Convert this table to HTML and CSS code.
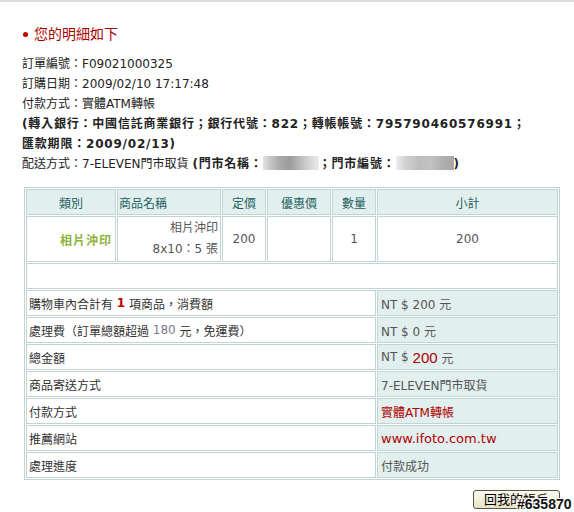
FILE: index.html
```html
<!DOCTYPE html>
<html lang="zh-Hant">
<head>
<meta charset="utf-8">
<title>您的明細如下</title>
<link rel="stylesheet" href="styles.css">
</head>
<body>
<div class="page">
  <h2 class="title"><span class="dot"></span>您的明細如下</h2>
  <div class="info">
    <p>訂單編號：F09021000325</p>
    <p>訂購日期：2009/02/10 17:17:48</p>
    <p>付款方式：實體ATM轉帳</p>
    <p class="b">(轉入銀行：中國信託商業銀行；銀行代號：822；轉帳帳號：795790460576991；<br>匯款期限：2009/02/13)</p>
    <p>配送方式：7-ELEVEN門市取貨 <span class="b">(門市名稱：<span class="blur blur-a"></span>；門市編號：<span class="blur blur-b"></span>)</span></p>
  </div>

  <div class="order">
    <div class="cell head">類別</div>
    <div class="cell head head-left">商品名稱</div>
    <div class="cell head">定價</div>
    <div class="cell head">優惠價</div>
    <div class="cell head">數量</div>
    <div class="cell head">小計</div>

    <div class="cell cat">相片沖印</div>
    <div class="cell name"><span>相片沖印</span><span>8x10：5 張</span></div>
    <div class="cell num">200</div>
    <div class="cell num"></div>
    <div class="cell num">1</div>
    <div class="cell num">200</div>

    <div class="cell blank"></div>

    <div class="cell label">購物車內合計有&nbsp;<span class="red-b">1</span>&nbsp;項商品，消費額</div>
    <div class="cell val">NT $ 200 元</div>

    <div class="cell label">處理費（訂單總額超過&nbsp;<span class="muted">180</span>&nbsp;元，免運費）</div>
    <div class="cell val">NT $ 0 元</div>

    <div class="cell label">總金額</div>
    <div class="cell val">NT $&nbsp;<span class="big-red">200</span>&nbsp;元</div>

    <div class="cell label">商品寄送方式</div>
    <div class="cell val">7-ELEVEN門市取貨</div>

    <div class="cell label">付款方式</div>
    <div class="cell val red">實體ATM轉帳</div>

    <div class="cell label">推薦網站</div>
    <div class="cell val red site">www.ifoto.com.tw</div>

    <div class="cell label">處理進度</div>
    <div class="cell val">付款成功</div>
  </div>

  <div class="actions"><button class="btn" type="button">回我的帳戶</button></div>
</div>
<div class="watermark">#635870</div>
</body>
</html>
```

FILE: styles.css
```css
html, body {
  margin: 0;
  padding: 0;
}

body {
  font-family: "DejaVu Sans", "Noto Sans CJK TC", sans-serif;
  font-size: 12px;
  color: #222;
  background: #fff;
  border-top: 2px solid #dcdcdc;
  position: relative;
  overflow: hidden;
}

.page {
  padding: 22px 0 0 22px;
  width: 540px;
}

.title {
  margin: 0;
  font-size: 14px;
  font-weight: normal;
  line-height: 20px;
  color: #a80000;
  display: flex;
  align-items: center;
  gap: 6px;
}

.dot {
  display: block;
  width: 5px;
  height: 5px;
  margin-left: 1px;
  border-radius: 50%;
  background: #c40000;
}

.info {
  margin-top: 10px;
}

.info p {
  margin: 0;
  line-height: 20px;
  white-space: nowrap;
}

.b {
  font-weight: bold;
  letter-spacing: 0.8px;
}

.blur {
  display: inline-block;
  height: 14px;
  vertical-align: -2px;
  letter-spacing: 0;
}

.blur-a {
  width: 56px;
  background: linear-gradient(90deg, #e4e4e4 0, #c8c8c8 12%, #a9a9a9 30%, #9c9c9c 48%, #b9b9b9 65%, #d4d4d4 82%, #ececec 100%);
}

.blur-b {
  width: 58px;
  background: linear-gradient(90deg, #eeeeee 0, #d2d2d2 15%, #bdbdbd 40%, #c2c2c2 60%, #b0aeb0 80%, #a9a5a7 100%);
}

.order {
  margin: 13px 0 0 2px;
  width: 536px;
  box-sizing: border-box;
  border: 1px solid #c2d3d3;
  padding: 1px;
  display: grid;
  grid-template-columns: 90px 104px 44px 64px 44px 181px;
  grid-template-rows: 26px 46px 26px repeat(7, 26px);
  gap: 1px;
}

.cell {
  box-sizing: border-box;
  border: 1px solid #c2d3d3;
  background: #fff;
  display: flex;
  align-items: center;
  color: #555;
  white-space: nowrap;
  overflow: hidden;
}

.head {
  background: #e2efef;
  color: #1d5f5f;
  justify-content: center;
}

.head-left {
  justify-content: flex-start;
  padding-left: 1px;
}

.cat {
  justify-content: flex-end;
  padding-right: 3px;
  color: #8cb43a;
  font-weight: bold;
  letter-spacing: 1px;
}

.name {
  flex-direction: column;
  align-items: flex-end;
  justify-content: center;
  padding-right: 2px;
  line-height: 21px;
}

.num {
  justify-content: center;
}

.blank {
  grid-column: 1 / -1;
}

.label {
  grid-column: 1 / 6;
  padding-left: 2px;
  color: #333;
}

.val {
  background: #e2efef;
  padding-left: 3px;
}

.red {
  color: #b00000;
}

.site {
  font-size: 13px;
}

.red-b {
  color: #c00000;
  font-weight: bold;
}

.muted {
  color: #7a7a8a;
}

.big-red {
  color: #b00000;
  font-family: "Liberation Sans", sans-serif;
  font-size: 15px;
}

.actions {
  margin: 10px 0 0 2px;
  width: 536px;
  display: flex;
  justify-content: flex-end;
}

.btn {
  width: 87px;
  height: 19px;
  padding: 0;
  box-sizing: border-box;
  border: 1px solid #56563a;
  border-radius: 3px;
  background: linear-gradient(#fcfbf2, #e7e2c8);
  color: #000;
  font-family: "DejaVu Sans", "Noto Sans CJK TC", sans-serif;
  font-size: 13px;
  line-height: 17px;
}

.watermark {
  position: absolute;
  left: 517px;
  top: 495px;
  font-family: "Liberation Sans", sans-serif;
  font-weight: bold;
  font-size: 14px;
  line-height: 14px;
  color: #111;
  text-shadow: 1px 0 0 #fff, -1px 0 0 #fff, 0 1px 0 #fff, 0 -1px 0 #fff, 1px 1px 0 #fff, -1px -1px 0 #fff, 1px -1px 0 #fff, -1px 1px 0 #fff;
}
```
